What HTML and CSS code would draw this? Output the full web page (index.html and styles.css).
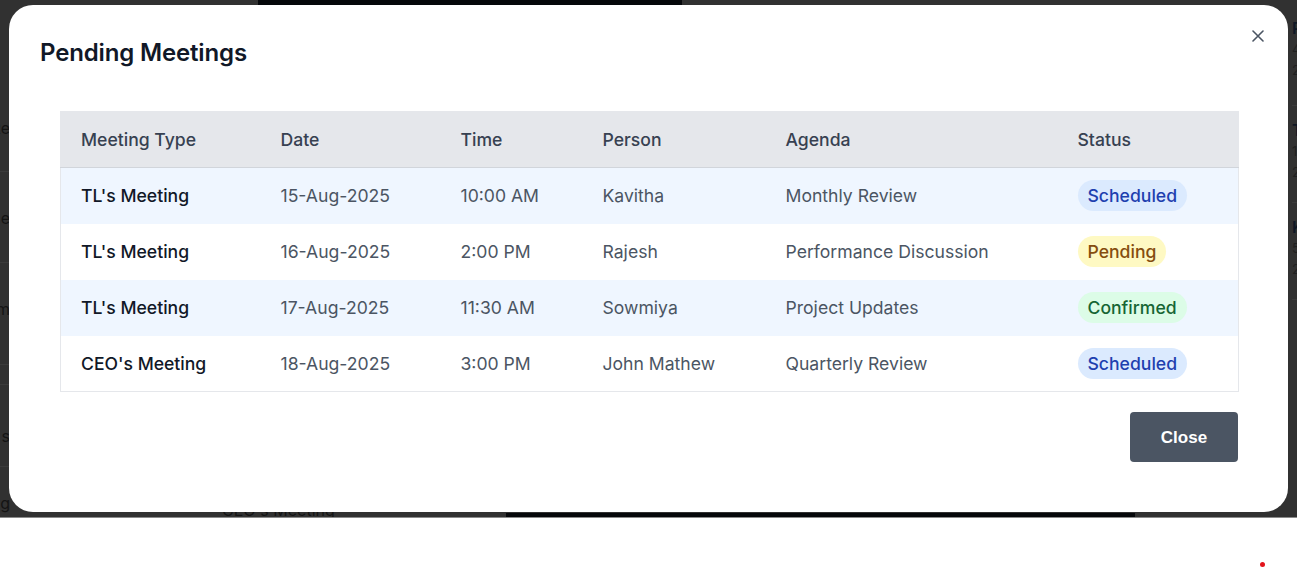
FILE: index.html
```html
<!DOCTYPE html>
<html lang="en">
<head>
<meta charset="utf-8">
<title>Pending Meetings</title>
<link rel="stylesheet" href="styles.css">
</head>
<body>
<div class="page">
  <div class="strip-top"><span class="seg-dark seg-top"></span></div>
  <div class="under">
    <div class="under-left">
      <div class="ul-item ul-1"><span>Re</span></div>
      <div class="ul-item ul-2"><span>e</span></div>
      <div class="ul-item ul-3"><span>m</span></div>
      <div class="ul-item ul-4"></div>
      <div class="ul-item ul-5"><span>s</span></div>
      <div class="ul-item ul-6"><span>ing</span></div>
    </div>
    <div class="under-mid">
      <div class="um-last">CEO's Meeting</div>
    </div>
    <div class="under-right">
      <div class="ur-item ur-1"><b>P</b><i>4</i><i>2</i></div>
      <div class="ur-item"><b>T</b><i>1</i><i>2</i></div>
      <div class="ur-item"><b>K</b><i>5</i><i>2</i></div>
    </div>
  </div>
  <div class="strip-bottom"><span class="seg-dark seg-bottom"></span></div>
</div>

<div class="modal" role="dialog" aria-labelledby="modal-title">
  <button class="modal-x" aria-label="Close">
    <svg width="12" height="12" viewBox="0 0 12 12" fill="none" stroke="currentColor" stroke-width="1.6" stroke-linecap="round"><path d="M1 1L11 11M11 1L1 11"/></svg>
  </button>
  <div class="modal-header">
    <h2 id="modal-title" class="modal-title">Pending Meetings</h2>
  </div>
  <div class="modal-body">
    <table class="meet-table">
      <thead>
        <tr><th class="c1">Meeting Type</th><th class="c2">Date</th><th class="c3">Time</th><th class="c4">Person</th><th class="c5">Agenda</th><th class="c6">Status</th></tr>
      </thead>
      <tbody>
        <tr class="alt"><td class="type">TL's Meeting</td><td>15-Aug-2025</td><td>10:00 AM</td><td>Kavitha</td><td>Monthly Review</td><td><span class="badge badge-blue">Scheduled</span></td></tr>
        <tr><td class="type">TL's Meeting</td><td>16-Aug-2025</td><td>2:00 PM</td><td>Rajesh</td><td>Performance Discussion</td><td><span class="badge badge-yellow">Pending</span></td></tr>
        <tr class="alt"><td class="type">TL's Meeting</td><td>17-Aug-2025</td><td>11:30 AM</td><td>Sowmiya</td><td>Project Updates</td><td><span class="badge badge-green">Confirmed</span></td></tr>
        <tr><td class="type">CEO's Meeting</td><td>18-Aug-2025</td><td>3:00 PM</td><td>John Mathew</td><td>Quarterly Review</td><td><span class="badge badge-blue">Scheduled</span></td></tr>
      </tbody>
    </table>
  </div>
  <div class="modal-footer">
    <button class="btn-close">Close</button>
  </div>
</div>

<span class="red-dot"></span>
</body>
</html>
```

FILE: styles.css
```css
* { box-sizing: border-box; }

html, body {
  margin: 0;
  padding: 0;
  background: #ffffff;
  font-family: Inter, "Noto Sans", "Liberation Sans", sans-serif;
}

/* ---------- underlying page, dimmed by overlay ---------- */
.page {
  height: 518px;
  background: #313131;
  display: flex;
  flex-direction: column;
  overflow: hidden;
  border-bottom: 1px solid #8a8a8a;
}

.strip-top {
  height: 5px;
  flex: none;
  padding-left: 258px;
  display: flex;
}
.strip-bottom {
  height: 4px;
  flex: none;
  padding-left: 506px;
  display: flex;
}
.seg-dark { display: block; background: #05070a; height: 100%; }
.seg-top { width: 424px; }
.seg-bottom { width: 629px; }

.under {
  flex: 1;
  display: flex;
  min-height: 0;
}

.under-left {
  width: 10px;
  flex: none;
  display: flex;
  flex-direction: column;
  color: #141414;
  font-size: 16px;
  line-height: 22px;
}
.ul-item {
  display: flex;
  justify-content: flex-end;
  white-space: nowrap;
  border-bottom: 1px solid #3b3b3b;
  overflow: hidden;
}
.ul-1 { height: 167px; padding-top: 112px; }
.ul-2 { height: 91px; padding-top: 35px; }
.ul-3 { height: 102px; padding-top: 35px; }
.ul-4 { height: 20px; }
.ul-5 { height: 82px; padding-top: 40px; }
.ul-6 { flex: 1; border-bottom: 0; padding-top: 25px; }

.under-mid {
  flex: 1;
  display: flex;
  flex-direction: column;
  justify-content: flex-end;
}
.um-last {
  padding-left: 212px;
  font-size: 16px;
  line-height: 18px;
  color: #141414;
  margin-bottom: -6px;
}

.under-right {
  width: 8px;
  flex: none;
  display: flex;
  flex-direction: column;
  padding-left: 3px;
  overflow: hidden;
}
.ur-item {
  display: flex;
  flex-direction: column;
  height: 97px;
  padding-top: 13px;
  border-bottom: 1px solid #3b3b3b;
}
.ur-1 { height: 101px; padding-top: 12px; }
.ur-item b { font-weight: 600; font-size: 16px; line-height: 22px; color: #0f1724; }
.ur-item i { font-style: normal; font-size: 13px; line-height: 21px; color: #202020; }

/* ---------- modal ---------- */
.modal {
  position: fixed;
  left: 9px;
  top: 5px;
  width: 1279px;
  height: 507px;
  background: #ffffff;
  border-radius: 24px;
  display: flex;
  flex-direction: column;
}

.modal-x {
  position: absolute;
  top: 24px;
  right: 23px;
  width: 14px;
  height: 14px;
  padding: 1px;
  border: 0;
  background: transparent;
  color: #4b5563;
  display: flex;
  align-items: center;
  justify-content: center;
  cursor: pointer;
}

.modal-header {
  padding: 32px 32px 0 31px;
}
.modal-title {
  margin: 0;
  font-size: 24px;
  line-height: 32px;
  font-weight: 600;
  color: #111827;
  letter-spacing: -0.15px;
}

.modal-body {
  padding: 42px 50px 0 51px;
}

.meet-table {
  width: 1178px;
  border-collapse: collapse;
  table-layout: fixed;
  border: 1px solid #e5e7eb;
  font-size: 17.6px;
}
.meet-table .c1 { width: 200px; }
.meet-table .c2 { width: 180px; }
.meet-table .c3 { width: 142px; }
.meet-table .c4 { width: 183px; }
.meet-table .c5 { width: 292px; }
.meet-table .c6 { width: 181px; }

.meet-table th {
  height: 56px;
  padding: 0 20px;
  text-align: left;
  font-weight: 500;
  color: #374151;
  background: #e5e7eb;
  border-bottom: 1px solid #d1d5db;
}
.meet-table td {
  height: 56px;
  padding: 0 20px;
  color: #4b5563;
  white-space: nowrap;
}
.meet-table tr.alt td { background: #eff6ff; }
.meet-table td.type { color: #111827; font-weight: 500; }

.badge {
  display: inline-block;
  padding: 4px 10px;
  border-radius: 999px;
  font-weight: 500;
  line-height: 23px;
}
.badge-blue { background: #dbeafe; color: #1e40af; }
.badge-yellow { background: #fef9c3; color: #854d0e; }
.badge-green { background: #dcfce7; color: #166534; }

.modal-footer {
  padding: 20px 50px 0 51px;
  display: flex;
  justify-content: flex-end;
}
.btn-close {
  width: 108px;
  height: 50px;
  padding: 2px 0 0 0;
  border: 0;
  border-radius: 4px;
  background: #4b5563;
  color: #ffffff;
  font-family: "Liberation Sans", Arial, sans-serif;
  font-weight: 700;
  font-size: 17px;
  cursor: pointer;
}

.red-dot {
  position: fixed;
  left: 1260px;
  top: 562px;
  width: 5px;
  height: 5px;
  border-radius: 50%;
  background: #e3141c;
}
```
